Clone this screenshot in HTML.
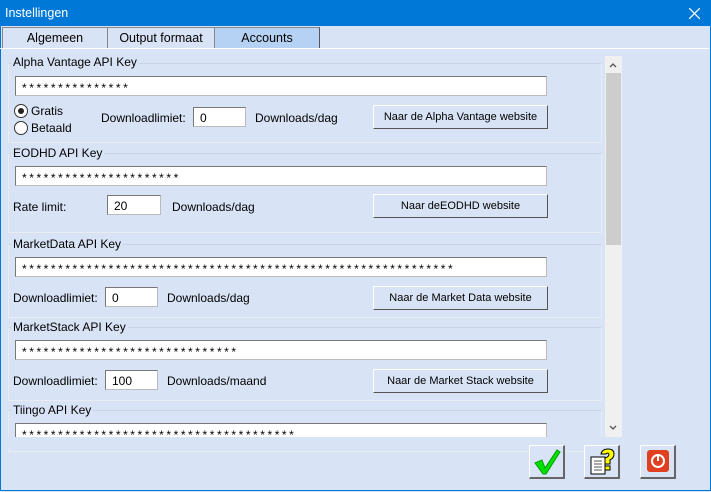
<html><head><style>
body{margin:0;width:711px;height:492px;background:#d8e4f5;font-family:"Liberation Sans",sans-serif;font-size:12px;position:relative;overflow:hidden;color:#000}
.a{position:absolute}
.tb{left:0;top:0;width:711px;height:26px;background:#0078d7;color:#fff}
.win{left:0;top:26px;width:709px;height:464px;border:1px solid #0078d7;border-top:none}
.tab{top:27px;height:20px;border:1px solid #888;border-right-color:#555;border-bottom:none;background:#d8e4f5;text-align:center;line-height:20px;font-size:12.5px}
.grp{left:8px;width:592px;border:1px solid #e8edf4;border-top-color:#c8d4e6}
.lbl{background:#d8e4f5;padding:0 2px}
.in{background:#fff;border:1px solid #777;border-bottom-color:#bbb;border-right-color:#bbb;height:20px;line-height:22px;padding-left:6px;box-sizing:border-box;font-size:12px;letter-spacing:2.55px;overflow:hidden;white-space:nowrap}
.btn{left:373px;width:175px;height:24px;background:#d8e4f5;border:1px solid #fff;border-right-color:#555;border-bottom-color:#555;box-sizing:border-box;text-align:center;line-height:22px;font-size:11px}
.bb{width:36px;height:34px;border:1px solid #fff;border-right:2px solid #666;border-bottom:2px solid #666;box-sizing:border-box;background:#d8e4f5}
.n{line-height:20px;letter-spacing:0}
</style></head><body>
<div class="a tb"><span class="a" style="left:5px;top:6px;font-size:12.5px">Instellingen</span><svg class="a" style="left:689px;top:8px" width="11" height="11"><path d="M0 0L11 11M11 0L0 11" stroke="#fff" stroke-width="1.2"/></svg></div>
<div class="a win"></div>
<div class="a tab" style="left:2px;width:104px">Algemeen</div>
<div class="a tab" style="left:107px;width:106px">Output formaat</div>
<div class="a tab" style="left:214px;width:104px;background:#b5d1f3">Accounts</div>
<div class="a" style="left:0;top:48px;width:709px;border-top:1px solid #fff"></div>

<div class="a grp" style="top:63px;height:78px"></div>
<div class="a lbl" style="left:11px;top:55px">Alpha Vantage API Key</div>
<div class="a in" style="left:15px;top:76px;width:532px">***************</div>
<div class="a" style="left:14px;top:104px;width:12px;height:12px;border:1px solid #333;border-radius:50%;background:#fff"><div class="a" style="left:3px;top:3px;width:6px;height:6px;border-radius:50%;background:#222"></div></div>
<div class="a" style="left:31px;top:104px">Gratis</div>
<div class="a" style="left:14px;top:121px;width:12px;height:12px;border:1px solid #333;border-radius:50%;background:#fff"></div>
<div class="a" style="left:31px;top:121px">Betaald</div>
<div class="a" style="left:101px;top:111px">Downloadlimiet:</div>
<div class="a in n" style="left:193px;top:107px;width:53px">0</div>
<div class="a" style="left:255px;top:111px">Downloads/dag</div>
<div class="a btn" style="top:105px">Naar de Alpha Vantage website</div>

<div class="a grp" style="top:153px;height:78px"></div>
<div class="a lbl" style="left:11px;top:146px">EODHD API Key</div>
<div class="a in" style="left:15px;top:166px;width:532px">**********************</div>
<div class="a" style="left:13px;top:200px">Rate limit:</div>
<div class="a in n" style="left:107px;top:195px;width:54px">20</div>
<div class="a" style="left:172px;top:200px">Downloads/dag</div>
<div class="a btn" style="top:194px">Naar deEODHD website</div>

<div class="a grp" style="top:244px;height:72px"></div>
<div class="a lbl" style="left:11px;top:237px">MarketData API Key</div>
<div class="a in" style="left:15px;top:257px;width:532px">************************************************************</div>
<div class="a" style="left:13px;top:291px">Downloadlimiet:</div>
<div class="a in n" style="left:105px;top:287px;width:53px">0</div>
<div class="a" style="left:167px;top:291px">Downloads/dag</div>
<div class="a btn" style="top:286px">Naar de Market Data website</div>

<div class="a grp" style="top:327px;height:72px"></div>
<div class="a lbl" style="left:11px;top:320px">MarketStack API Key</div>
<div class="a in" style="left:15px;top:340px;width:532px">******************************</div>
<div class="a" style="left:13px;top:374px">Downloadlimiet:</div>
<div class="a in n" style="left:105px;top:370px;width:53px">100</div>
<div class="a" style="left:167px;top:374px">Downloads/maand</div>
<div class="a btn" style="top:369px">Naar de Market Stack website</div>

<div class="a grp" style="top:410px;height:40px"></div>
<div class="a lbl" style="left:11px;top:403px">Tiingo API Key</div>
<div class="a" style="left:15px;top:423px;width:532px;height:14px;overflow:hidden"><div class="in" style="width:532px">**************************************</div></div>
<div class="a" style="left:1px;top:437px;width:604px;height:12px;background:#d8e4f5"></div>

<div class="a" style="left:605px;top:56px;width:17px;height:381px;background:#f0f0f0"></div>
<div class="a" style="left:606px;top:73px;width:15px;height:172px;background:#cdcdcd"></div>
<svg class="a" style="left:609px;top:62px" width="8" height="6"><path d="M1 5L4 2L7 5" stroke="#555" fill="none" stroke-width="1.3"/></svg>
<svg class="a" style="left:609px;top:425px" width="8" height="6"><path d="M1 1L4 4L7 1" stroke="#555" fill="none" stroke-width="1.3"/></svg>

<div class="a bb" style="left:529px;top:445px"><svg width="34" height="32"><path d="M5 17 L12 14 L15 22 L27 4 L30 6 L16 28 L13 28 Z" fill="#00e000" stroke="#00a000" stroke-width="1"/></svg></div>
<div class="a bb" style="left:584px;top:445px"><svg width="34" height="32"><rect x="6" y="11" width="14" height="17" fill="#fff" stroke="#000"/><path d="M9 15h8M9 18h8M9 21h8M9 24h8" stroke="#555"/><path d="M16 8 Q17 3 23 3 Q29 3 29 8 Q29 12 25 14 L25 18 L20 18 L20 12 Q24 11 24 8 Q23 6 21 8 Z" fill="#ffff00" stroke="#000"/><rect x="20" y="20" width="5" height="4" fill="#ffff00" stroke="#000"/></svg></div>
<div class="a bb" style="left:640px;top:445px"><svg width="34" height="32"><rect x="6" y="4" width="22" height="22" rx="3" fill="#e04020"/><circle cx="17" cy="15" r="6" fill="none" stroke="#fff" stroke-width="2"/><rect x="16" y="8" width="2" height="7" fill="#fff"/></svg></div>
</body></html>
